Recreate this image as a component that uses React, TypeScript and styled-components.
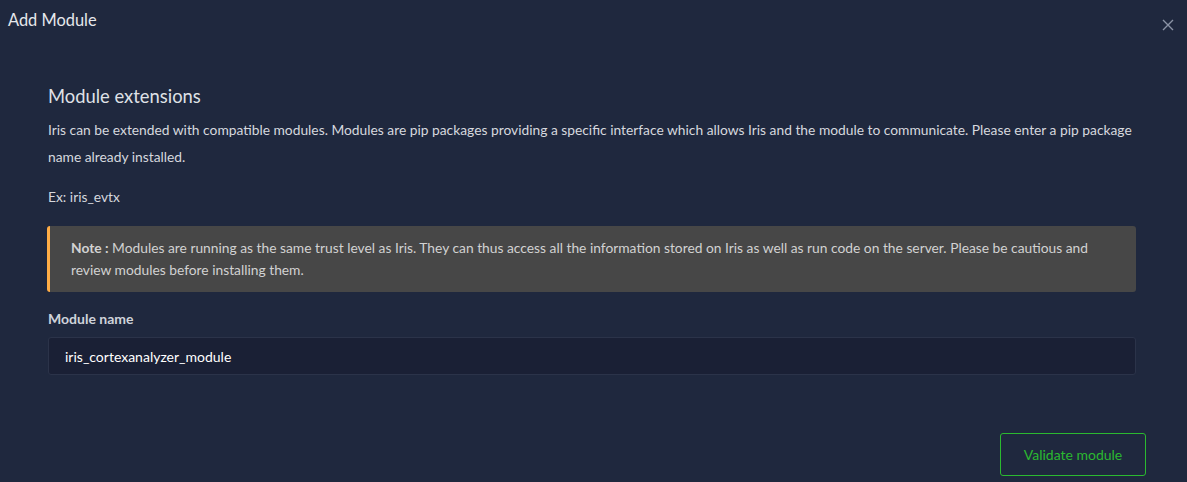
import React from "react";
import styled, { createGlobalStyle } from "styled-components";

const Global = createGlobalStyle`
  html, body { margin: 0; padding: 0; background: #1f283e; }
  body { font-family: Lato, "Open Sans", sans-serif; color: #d8dae0; }
  * { box-sizing: border-box; }
`;

const Modal = styled.div`
  width: 1187px;
  height: 482px;
  background: #1f283e;
  display: flex;
  flex-direction: column;
  overflow: hidden;
`;

const Header = styled.div`
  display: flex;
  justify-content: space-between;
  align-items: flex-start;
  padding: 9px 12px 0 8px;
  height: 58px;
`;

const Title = styled.h4`
  margin: 0;
  font-size: 16.4px;
  font-weight: 400;
  color: #e6e8ec;
  line-height: 22px;
`;

const Close = styled.button`
  background: none;
  border: none;
  padding: 0;
  margin-top: 9px;
  width: 14px;
  height: 14px;
  color: #8b93a5;
  display: flex;
`;

const Body = styled.div`
  padding: 26px 51px 0 48px;
  display: flex;
  flex-direction: column;
`;

const H5 = styled.h5`
  margin: 0 0 8px;
  font-size: 18.4px;
  font-weight: 400;
  color: #dfe1e6;
  line-height: 24px;
`;

const P = styled.p`
  margin: 0;
  font-size: 13.8px;
  line-height: 27px;
  color: #d6d8de;
`;

const Ex = styled(P)`
  margin-top: 13px;
`;

const Note = styled.div`
  margin: 16px 0 0 -1px;
  background: #474747;
  border-left: 3px solid #ffad46;
  border-radius: 3px;
  padding: 11px 20px 11px 21px;
  font-size: 13.8px;
  line-height: 22px;
  color: #d2d2d2;
  b { font-weight: 700; }
`;

const Label = styled.label`
  display: block;
  margin-top: 17px;
  font-size: 14px;
  font-weight: 700;
  color: #cfd3da;
  line-height: 20px;
`;

const Input = styled.input`
  margin-top: 8px;
  width: 100%;
  height: 38px;
  background: #1a2035;
  border: 1px solid #2b3349;
  border-radius: 3px;
  padding: 0 16px;
  font-family: Lato, sans-serif;
  font-size: 14px;
  color: #ffffff;
  outline: none;
`;

const Footer = styled.div`
  display: flex;
  justify-content: flex-end;
  padding: 58px 41px 0 0;
`;

const Button = styled.button`
  width: 146px;
  height: 43px;
  background: transparent;
  border: 1px solid #2bb930;
  border-radius: 3px;
  color: #2bb930;
  font-family: Lato, sans-serif;
  font-size: 14px;
`;

export default function App() {
  return (
    <Modal>
      <Global />
      <Header>
        <Title>Add Module</Title>
        <Close aria-label="close">
          <svg width="14" height="14" viewBox="0 0 14 14">
            <path d="M2 2 L12 12 M12 2 L2 12" stroke="currentColor" strokeWidth="1.4" />
          </svg>
        </Close>
      </Header>
      <Body>
        <H5>Module extensions</H5>
        <P>
          Iris can be extended with compatible modules. Modules are pip packages providing a specific interface which allows Iris and the module to communicate. Please enter a pip package name already installed.
        </P>
        <Ex>Ex: iris_evtx</Ex>
        <Note>
          <b>Note :</b> Modules are running as the same trust level as Iris. They can thus access all the information stored on Iris as well as run code on the server. Please be cautious and review modules before installing them.
        </Note>
        <Label>Module name</Label>
        <Input defaultValue="iris_cortexanalyzer_module" />
      </Body>
      <Footer>
        <Button>Validate module</Button>
      </Footer>
    </Modal>
  );
}
